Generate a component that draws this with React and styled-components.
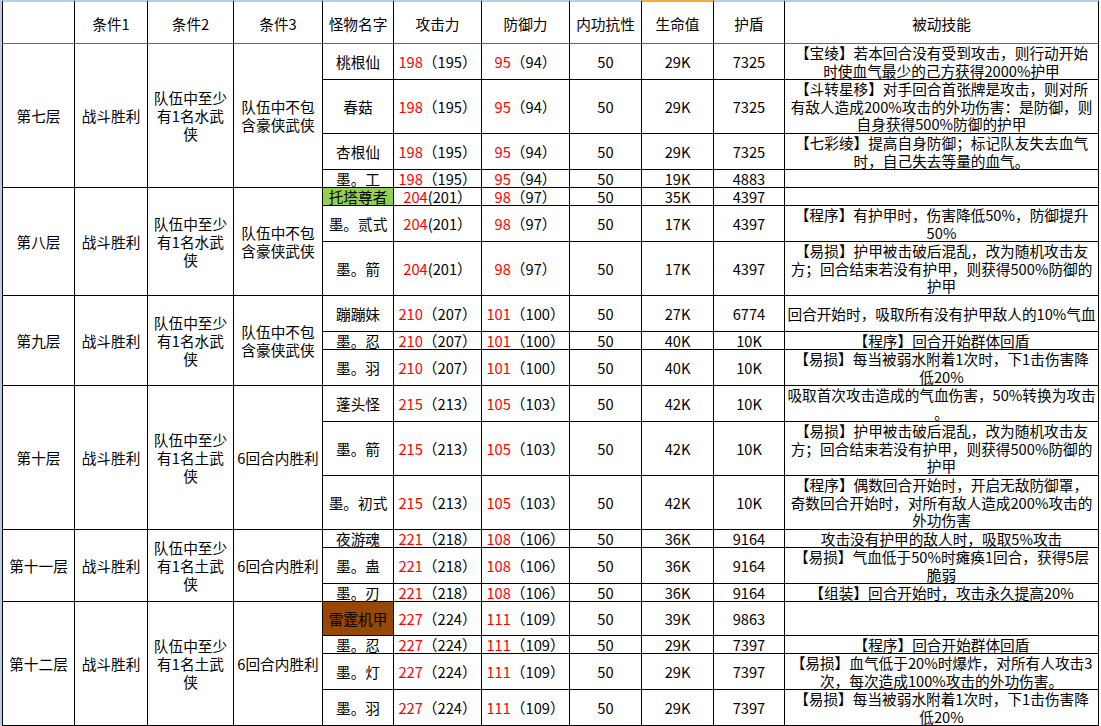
import React from "react";
import styled, { createGlobalStyle } from "styled-components";

const GlobalStyle = createGlobalStyle`
  html, body {
    margin: 0;
    padding: 0;
    background: #ffffff;
  }
  body {
    font-family: "Noto Sans CJK SC", "Liberation Sans", sans-serif;
    overflow: hidden;
  }
`;

const COLS = [73, 73, 86, 89, 71, 88, 88, 72, 72, 71, 314];

const COND_WATER = ["队伍中至少", "有1名水武", "侠"];
const COND_EARTH = ["队伍中至少", "有1名土武", "侠"];
const NO_HAOXIA = ["队伍中不包", "含豪侠武侠"];
const SIX_ROUNDS = ["6回合内胜利"];

const YISUN_RUO = ["【易损】每当被弱水附着1次时，下1击伤害降", "低20%"];
const YISUN_HUJIA = [
  "【易损】护甲被击破后混乱，改为随机攻击友",
  "方；回合结束若没有护甲，则获得500%防御的",
  "护甲",
];

const groups = [
  {
    floor: "第七层",
    c2: COND_WATER,
    c3: NO_HAOXIA,
    atk: ["198", "（195）"],
    def: ["95", "（94）"],
    mobs: [
      { h: 36, name: "桃根仙", hp: "29K", shield: "7325", skill: ["【宝绫】若本回合没有受到攻击，则行动开始", "时使血气最少的己方获得2000%护甲"] },
      { h: 54, name: "春菇", hp: "29K", shield: "7325", skill: ["【斗转星移】对手回合首张牌是攻击，则对所", "有敌人造成200%攻击的外功伤害：是防御，则", "自身获得500%防御的护甲"] },
      { h: 36, name: "杏根仙", hp: "29K", shield: "7325", skill: ["【七彩绫】提高自身防御；标记队友失去血气", "时，自己失去等量的血气。"] },
      { h: 18, name: "墨。工", hp: "19K", shield: "4883", skill: [] },
    ],
  },
  {
    floor: "第八层",
    c2: COND_WATER,
    c3: NO_HAOXIA,
    atk: ["204", "(201）"],
    def: ["98", "（97）"],
    mobs: [
      { h: 18, name: "托塔尊者", bg: "#92d050", hp: "35K", shield: "4397", skill: [] },
      { h: 36, name: "墨。贰式", hp: "17K", shield: "4397", skill: ["【程序】有护甲时，伤害降低50%，防御提升", "50%"] },
      { h: 54, name: "墨。箭", hp: "17K", shield: "4397", skill: YISUN_HUJIA },
    ],
  },
  {
    floor: "第九层",
    c2: COND_WATER,
    c3: NO_HAOXIA,
    atk: ["210", "（207）"],
    def: ["101", "（100）"],
    mobs: [
      { h: 36, name: "蹦蹦妹", hp: "27K", shield: "6774", skill: ["回合开始时，吸取所有没有护甲敌人的10%气血"] },
      { h: 18, name: "墨。忍", hp: "40K", shield: "10K", skill: ["【程序】回合开始群体回盾"] },
      { h: 36, name: "墨。羽", hp: "40K", shield: "10K", skill: YISUN_RUO },
    ],
  },
  {
    floor: "第十层",
    c2: COND_EARTH,
    c3: SIX_ROUNDS,
    atk: ["215", "（213）"],
    def: ["105", "（103）"],
    mobs: [
      { h: 36, name: "蓬头怪", hp: "42K", shield: "10K", skill: ["吸取首次攻击造成的气血伤害，50%转换为攻击", "。"] },
      { h: 54, name: "墨。箭", hp: "42K", shield: "10K", skill: YISUN_HUJIA },
      { h: 54, name: "墨。初式", hp: "42K", shield: "10K", skill: ["【程序】偶数回合开始时，开启无敌防御罩，", "奇数回合开始时，对所有敌人造成200%攻击的", "外功伤害"] },
    ],
  },
  {
    floor: "第十一层",
    c2: COND_EARTH,
    c3: SIX_ROUNDS,
    atk: ["221", "（218）"],
    def: ["108", "（106）"],
    mobs: [
      { h: 18, name: "夜游魂", hp: "36K", shield: "9164", skill: ["攻击没有护甲的敌人时，吸取5%攻击"] },
      { h: 36, name: "墨。蛊", hp: "36K", shield: "9164", skill: ["【易损】气血低于50%时瘫痪1回合，获得5层", "脆弱"] },
      { h: 18, name: "墨。刃", hp: "36K", shield: "9164", skill: ["【组装】回合开始时，攻击永久提高20%"] },
    ],
  },
  {
    floor: "第十二层",
    c2: COND_EARTH,
    c3: SIX_ROUNDS,
    atk: ["227", "（224）"],
    def: ["111", "（109）"],
    mobs: [
      { h: 34, name: "雷霆机甲", bg: "#974706", hp: "39K", shield: "9863", skill: [] },
      { h: 18, name: "墨。忍", hp: "29K", shield: "7397", skill: ["【程序】回合开始群体回盾"] },
      { h: 36, name: "墨。灯", hp: "29K", shield: "7397", skill: ["【易损】血气低于20%时爆炸，对所有人攻击3", "次，每次造成100%攻击的外功伤害。"] },
      { h: 36, name: "墨。羽", hp: "29K", shield: "7397", skill: YISUN_RUO },
    ],
  },
];

const rowHeights = ["44px"].concat(
  groups.flatMap((g) => g.mobs.map((m) => `${m.h}px`))
);

const headers = ["", "条件1", "条件2", "条件3", "怪物名字", "攻击力", "防御力", "内功抗性", "生命值", "护盾", "被动技能"];

const Sheet = styled.div`
  display: grid;
  grid-template-columns: ${COLS.map((c) => `${c}px`).join(" ")};
  grid-template-rows: ${rowHeights.join(" ")};
  width: max-content;
  border-left: 2px solid #b8cce4;
  font-size: 14.67px;
  line-height: 17px;
  color: #000000;
`;

const Cell = styled.div`
  box-sizing: border-box;
  display: flex;
  flex-direction: column;
  align-items: center;
  justify-content: center;
  text-align: center;
  white-space: nowrap;
  overflow: hidden;
  background: ${(p) => p.$bg || "#ffffff"};
  border-right: 1px solid #000000;
  border-bottom: 1px solid #000000;
  border-left: ${(p) => (p.$first ? "1px solid #000000" : "0")};
`;

const HeaderCell = styled(Cell)`
  border-top: 2px solid ${(p) => (p.$active ? "#f4a941" : "#b8cce4")};
  border-bottom-color: #6a6a6a;
  padding-top: 2px;
`;

const SpanCell = styled(Cell)`
  grid-row: span ${(p) => p.$span};
  line-height: 18px;
`;

const Line = styled.span`
  display: block;
  line-height: ${(p) => p.$lh}px;
  height: ${(p) => p.$lh}px;
`;

const Red = styled.span`
  color: #ff0000;
`;

function Lines({ lines, h }) {
  const lh = h ? Math.min(18, (h - 1) / Math.max(lines.length, 1)) : 18;
  return lines.map((l, i) => (
    <Line key={i} $lh={lh}>
      {l}
    </Line>
  ));
}

export default function App() {
  return (
    <>
      <GlobalStyle />
      <Sheet>
        {headers.map((h, i) => (
          <HeaderCell key={`h${i}`} $first={i === 0} $active={h === "生命值"}>
            {h}
          </HeaderCell>
        ))}
        {groups.map((g, gi) => (
          <React.Fragment key={gi}>
            <SpanCell $first $span={g.mobs.length}>
              {g.floor}
            </SpanCell>
            <SpanCell $span={g.mobs.length}>战斗胜利</SpanCell>
            <SpanCell $span={g.mobs.length}>
              <Lines lines={g.c2} />
            </SpanCell>
            <SpanCell $span={g.mobs.length}>
              <Lines lines={g.c3} />
            </SpanCell>
            {g.mobs.map((m, mi) => (
              <React.Fragment key={mi}>
                <Cell $bg={m.bg}>{m.name}</Cell>
                <Cell>
                  <span>
                    <Red>{g.atk[0]}</Red>
                    {g.atk[1]}
                  </span>
                </Cell>
                <Cell>
                  <span>
                    <Red>{g.def[0]}</Red>
                    {g.def[1]}
                  </span>
                </Cell>
                <Cell>50</Cell>
                <Cell>{m.hp}</Cell>
                <Cell>{m.shield}</Cell>
                <Cell>
                  <Lines lines={m.skill} h={m.h} />
                </Cell>
              </React.Fragment>
            ))}
          </React.Fragment>
        ))}
      </Sheet>
    </>
  );
}
